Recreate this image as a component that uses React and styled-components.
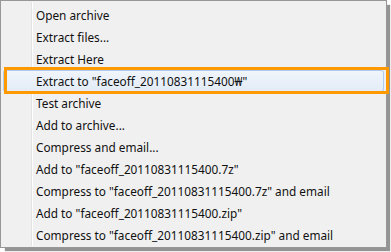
import styled, { createGlobalStyle } from "styled-components";

const GlobalStyle = createGlobalStyle`
  html, body {
    margin: 0;
    padding: 0;
    background: #ffffff;
  }
`;

const Page = styled.div`
  width: 391px;
  height: 252px;
  overflow: hidden;
`;

const Menu = styled.ul`
  position: relative;
  box-sizing: border-box;
  width: 387px;
  height: 248px;
  margin: 0;
  padding: 3px 0 1px 0;
  list-style: none;
  background: #f0f0f0;
  border: 1px solid #979797;
  box-shadow: 4px 4px 1px -1px rgba(0, 0, 0, 0.42);
  font-family: "Noto Sans", "Open Sans", sans-serif;
  font-size: 11.8px;
  color: #111;
  &::before {
    content: "";
    position: absolute;
    top: 1px;
    bottom: 1px;
    left: 30px;
    width: 1px;
    background: #e2e3e3;
    border-right: 1px solid #ffffff;
  }
`;

const Item = styled.li`
  position: relative;
  z-index: 1;
  height: 22px;
  line-height: 22px;
  padding-left: 35px;
  white-space: nowrap;
  ${(p) =>
    p.$active &&
    `
    margin: 0 2px 0 2px;
    padding-left: 33px;
    border-radius: 3px;
    background: linear-gradient(#f1f5fb, #e2ebf6);
    box-shadow: inset 0 0 0 1px #aeccf0;
    &::after {
      content: "";
      position: absolute;
      top: -3px;
      bottom: -2px;
      left: 1px;
      right: -5px;
      border: 3px solid #ff9900;
    }
  `}
`;

const items = [
  "Open archive",
  "Extract files...",
  "Extract Here",
  'Extract to "faceoff_20110831115400₩"',
  "Test archive",
  "Add to archive...",
  "Compress and email...",
  'Add to "faceoff_20110831115400.7z"',
  'Compress to "faceoff_20110831115400.7z" and email',
  'Add to "faceoff_20110831115400.zip"',
  'Compress to "faceoff_20110831115400.zip" and email',
];

export default function App() {
  return (
    <Page>
      <GlobalStyle />
      <Menu>
        {items.map((label, i) => (
          <Item key={label} $active={i === 3}>
            {label}
          </Item>
        ))}
      </Menu>
    </Page>
  );
}
